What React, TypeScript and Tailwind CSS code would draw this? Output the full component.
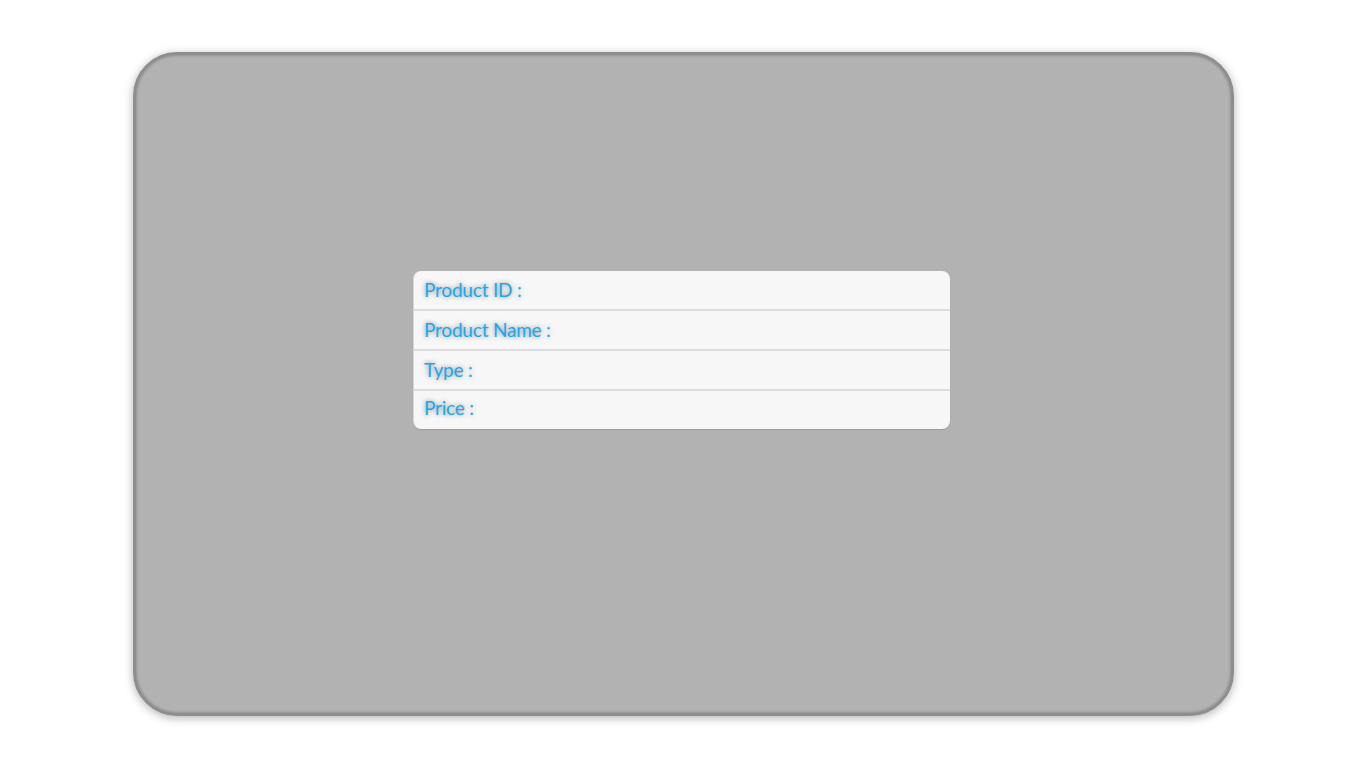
const rows = ["Product ID :", "Product Name :", "Type :", "Price :"];

export default function App() {
  return (
    <div className="h-screen w-full bg-white flex items-center justify-center">
      <div className="w-[1101px] h-[664px] rounded-[44px] bg-[#b2b2b2] border-[3px] border-[#8e8e8e] shadow-[0_2px_10px_rgba(0,0,0,0.3),inset_0_0_3px_rgba(0,0,0,0.35)] flex flex-col items-center pt-[216px]">
        <div className="w-[537px] ml-[-3px] rounded-[8px] bg-[#f7f7f7] border-l border-[#d8d8d8] shadow-[0_1px_1px_rgba(0,0,0,0.12)] overflow-hidden">
          {rows.map((label, i) => (
            <div
              key={label}
              className={
                "flex items-center pl-[10px] " +
                (i < rows.length - 1 ? "h-[40px] border-b-2 border-[#dcdcdc]" : "h-[38px] pb-[4px]")
              }
            >
              <span className="font-['Lato',sans-serif] text-[19px] text-[#18a9f0] [text-shadow:0_0_5px_rgba(0,0,0,0.45)] tracking-[-0.2px]">
                {label}
              </span>
            </div>
          ))}
        </div>
      </div>
    </div>
  );
}
